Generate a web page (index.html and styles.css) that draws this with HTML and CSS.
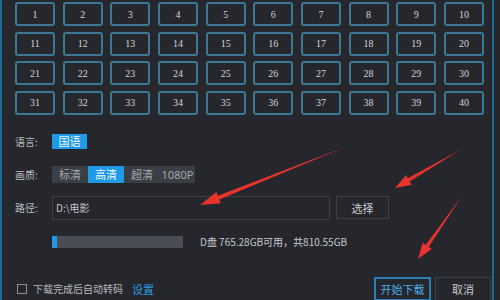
FILE: index.html
```html
<!DOCTYPE html>
<html>
<head>
<meta charset="utf-8">
<link rel="stylesheet" href="styles.css">
</head>
<body>
<div class="app">
  <div class="grid">
    <div class="cell">1</div><div class="cell">2</div><div class="cell">3</div><div class="cell">4</div><div class="cell">5</div><div class="cell">6</div><div class="cell">7</div><div class="cell">8</div><div class="cell">9</div><div class="cell">10</div>
    <div class="cell">11</div><div class="cell">12</div><div class="cell">13</div><div class="cell">14</div><div class="cell">15</div><div class="cell">16</div><div class="cell">17</div><div class="cell">18</div><div class="cell">19</div><div class="cell">20</div>
    <div class="cell">21</div><div class="cell">22</div><div class="cell">23</div><div class="cell">24</div><div class="cell">25</div><div class="cell">26</div><div class="cell">27</div><div class="cell">28</div><div class="cell">29</div><div class="cell">30</div>
    <div class="cell">31</div><div class="cell">32</div><div class="cell">33</div><div class="cell">34</div><div class="cell">35</div><div class="cell">36</div><div class="cell">37</div><div class="cell">38</div><div class="cell">39</div><div class="cell">40</div>
  </div>
  <div class="row lang">
    <span class="label">语言:</span>
    <span class="chip">国语</span>
  </div>
  <div class="row quality">
    <span class="label">画质:</span>
    <div class="seg">
      <span class="seg-item">标清</span>
      <span class="seg-item active">高清</span>
      <span class="seg-item">超清</span>
      <span class="seg-item">1080P</span>
    </div>
  </div>
  <div class="row path">
    <span class="label">路径:</span>
    <div class="input">D:\电影</div>
    <div class="btn select">选择</div>
  </div>
  <div class="row disk">
    <div class="bar"><div class="fill"></div></div>
    <span class="info">D盘 765.28GB可用，共810.55GB</span>
  </div>
  <div class="row bottom">
    <span class="box"></span>
    <span class="chk-text">下载完成后自动转码</span>
    <span class="link">设置</span>
    <span class="spacer"></span>
    <div class="btn start">开始下载</div>
    <div class="btn cancel">取消</div>
  </div>
  <svg class="arrows" width="500" height="300" viewBox="0 0 500 300">
    <polygon points="200,205 220.8,203.2 219.3,199.5 345,147 217.9,195.7 216.4,192" />
    <polygon points="395,188 411.6,184.7 409.7,181.5 460,150 407.9,178.3 406,175.2" />
    <polygon points="418,259 431.7,249 428.7,246.9 462,196 425.7,244.9 422.7,242.7" />
  </svg>
</div>
</body>
</html>
```

FILE: styles.css
```css
* { box-sizing: border-box; }
html, body { margin: 0; padding: 0; background: #25272d; }
.app {
  position: relative;
  width: 494px;
  height: 300px;
  overflow: hidden;
  background: #25272d;
  border-left: 2px solid #1d6a96;
  border-right: 2px solid #1d6a96;
  font-family: "Noto Sans CJK SC", "Noto Sans", sans-serif;
  color: #c9cacc;
  font-size: 11px;
}
.grid {
  display: grid;
  grid-template-columns: repeat(10, 40px);
  column-gap: 7.67px;
  row-gap: 5.5px;
  padding: 2px 0 0 13px;
}
.cell {
  height: 24px;
  border: 2px solid #3a7894;
  border-radius: 3px;
  background: #25272d;
  display: flex;
  align-items: center;
  justify-content: center;
  font-family: "Liberation Serif", serif;
  font-size: 10px;
  color: #d6d6d6;
}
.row {
  display: flex;
  align-items: center;
  padding-left: 13px;
}
.label {
  width: 37px;
  font-size: 10px;
  color: #b8babd;
}
.lang { margin-top: 19px; height: 15px; }
.chip {
  background: #1f9ae6;
  color: #eef7ff;
  width: 35px;
  height: 15px;
  display: flex;
  align-items: center;
  justify-content: center;
  font-size: 11px;
}
.quality { margin-top: 17px; height: 17px; }
.seg {
  display: flex;
  background: #3b3e44;
  height: 17px;
}
.seg-item {
  width: 36px;
  display: flex;
  align-items: center;
  justify-content: center;
  color: #a4a7ab;
  font-size: 11px;
}
.seg-item:last-child { width: 35px; font-family: "Noto Sans", sans-serif; }
.seg-item.active { background: #1f9ae6; color: #eef7ff; }
.path { margin-top: 13px; height: 24px; }
.input {
  width: 278px;
  height: 24px;
  border: 1px solid #3c3f45;
  display: flex;
  align-items: center;
  padding-left: 3px;
  color: #c2c4c7;
  font-size: 10px;
}
.btn {
  height: 24px;
  display: flex;
  align-items: center;
  justify-content: center;
  border: 1px solid #3c3f45;
  color: #c8c9cc;
  font-size: 11px;
}
.select { width: 53px; margin-left: 6px; height: 23px; }
.disk { margin-top: 16px; height: 12px; padding-left: 50px; }
.bar {
  width: 131px;
  height: 12px;
  background: #4a4d53;
}
.fill { width: 5px; height: 12px; background: #1f9ae6; }
.info { margin-left: 17px; font-size: 10px; color: #c8c9cc; }
.bottom { margin-top: 29px; height: 24px; padding-left: 15px; }
.box {
  width: 10px;
  height: 10px;
  border: 1px solid #8b8e92;
}
.chk-text { margin-left: 6px; font-size: 10px; color: #b8babd; }
.link { margin-left: 9px; color: #2b9be0; font-size: 11px; }
.spacer { flex: 1; }
.start {
  width: 57px;
  border: 2px solid #2a7fb6;
  color: #4aaee8;
}
.cancel { width: 56px; margin-left: 4px; margin-right: 1px; }
.arrows {
  position: absolute;
  left: -2px;
  top: 0;
  pointer-events: none;
}
.arrows polygon { fill: #e8322b; }
```
